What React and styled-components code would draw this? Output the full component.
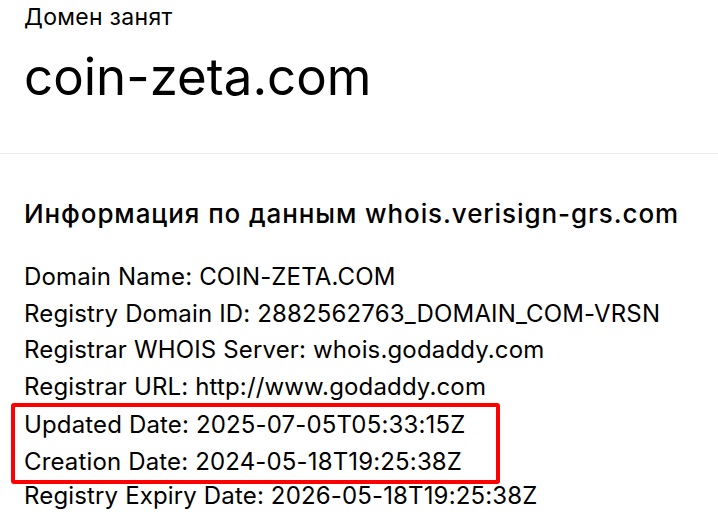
import React from "react";
import styled, { createGlobalStyle } from "styled-components";

const GlobalStyle = createGlobalStyle`
    body {
        margin: 0;
        background: #fff;
        color: #000;
        font-family: Inter, "Noto Sans", sans-serif;
    }
`;

const records = [
    ["Domain Name", "COIN-ZETA.COM"],
    ["Registry Domain ID", "2882562763_DOMAIN_COM-VRSN"],
    ["Registrar WHOIS Server", "whois.godaddy.com"],
    ["Registrar URL", "http://www.godaddy.com"],
    ["Updated Date", "2025-07-05T05:33:15Z", true],
    ["Creation Date", "2024-05-18T19:25:38Z", true],
    ["Registry Expiry Date", "2026-05-18T19:25:38Z"],
];

const App = () => {
    const plain = records.filter((r) => !r[2]);
    const before = plain.slice(0, 4);
    const marked = records.filter((r) => r[2]);
    const after = plain.slice(4);
    return (
        <Page>
            <GlobalStyle />
            <Header>
                <Status>Домен занят</Status>
                <DomainTitle>coin-zeta.com</DomainTitle>
            </Header>
            <Whois>
                <Title>Информация по данным whois.verisign-grs.com</Title>
                <Records>
                    {before.map(([label, value]) => (
                        <Line key={label}>{label}: {value}</Line>
                    ))}
                    <Highlight>
                        {marked.map(([label, value]) => (
                            <Line key={label}>{label}: {value}</Line>
                        ))}
                    </Highlight>
                    {after.map(([label, value]) => (
                        <Line key={label}>{label}: {value}</Line>
                    ))}
                </Records>
            </Whois>
        </Page>
    );
};

const Page = styled.main`
    width: 718px;
    height: 520px;
    overflow: hidden;
`;

const Header = styled.section`
    padding: 2px 24px 0;
    height: 151px;
    border-bottom: 1px solid #ebebeb;
`;

const Status = styled.div`
    font-size: 23px;
    line-height: 30px;
    letter-spacing: 0.3px;
`;

const DomainTitle = styled.h1`
    margin: 12px 0 0;
    font-size: 51px;
    font-weight: 400;
    line-height: 66px;
    letter-spacing: 0;
`;

const Whois = styled.section`
    padding: 42px 24px 0;
`;

const Title = styled.h2`
    margin: 0 0 27px;
    font-size: 26px;
    font-weight: 500;
    line-height: 36px;
    letter-spacing: 0.9px;
`;

const Records = styled.div`
    display: flex;
    flex-direction: column;
`;

const Line = styled.div`
    font-size: 24px;
    line-height: 36.7px;
    letter-spacing: 0.15px;
    white-space: nowrap;
`;

const Highlight = styled.div`
    margin: -3px 0 -6px -13px;
    padding: 0 9px;
    width: 463px;
    border: 4px solid #ff0000;
    border-radius: 3px;
`;

export default App;
